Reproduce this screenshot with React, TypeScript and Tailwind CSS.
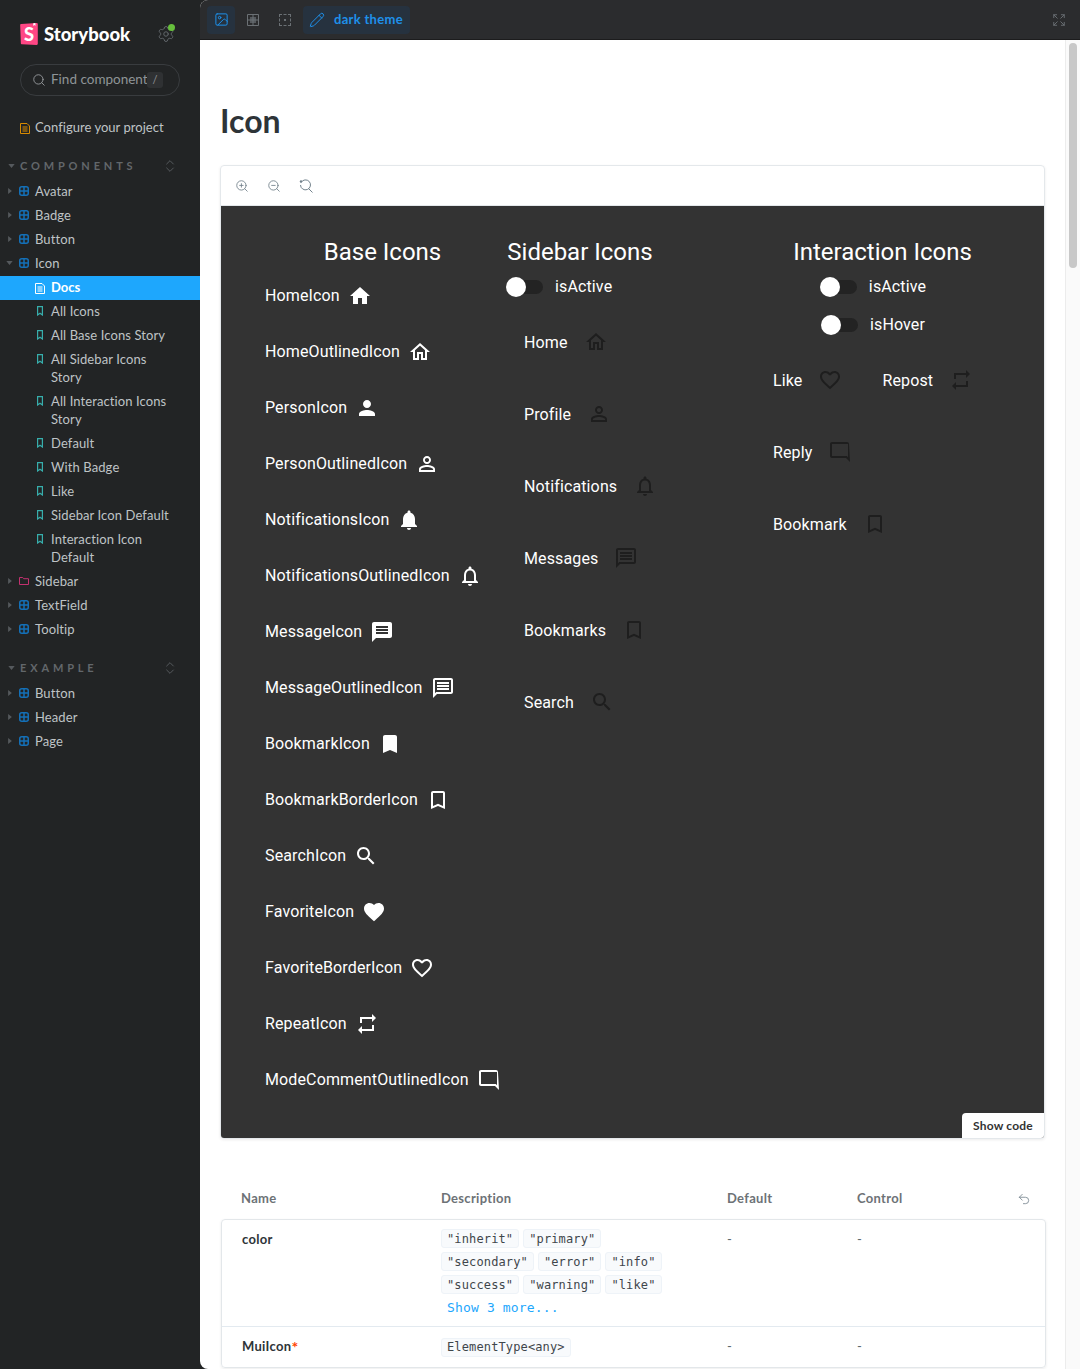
import React from "react";
import { Search, Settings, ZoomIn, ZoomOut, Undo2, ChevronsUpDown, Image, Pencil, Expand } from "lucide-react";

const P: Record<string, string> = {
  home: "M10 20v-6h4v6h5v-8h3L12 3 2 12h3v8z",
  homeO: "m12 5.69 5 4.5V18h-2v-6H9v6H7v-7.81zM12 3 2 12h3v8h6v-6h2v6h6v-8h3z",
  person: "M12 12c2.21 0 4-1.79 4-4s-1.79-4-4-4-4 1.79-4 4 1.79 4 4 4m0 2c-2.67 0-8 1.34-8 4v2h16v-2c0-2.66-5.33-4-8-4",
  personO: "M12 5.9c1.16 0 2.1.94 2.1 2.1s-.94 2.1-2.1 2.1S9.9 9.16 9.9 8s.94-2.1 2.1-2.1m0 9c2.97 0 6.1 1.46 6.1 2.1v1.1H5.9V17c0-.64 3.13-2.1 6.1-2.1M12 4C9.79 4 8 5.79 8 8s1.79 4 4 4 4-1.79 4-4-1.79-4-4-4m0 9c-2.67 0-8 1.34-8 4v3h16v-3c0-2.66-5.33-4-8-4",
  bell: "M12 22c1.1 0 2-.9 2-2h-4c0 1.1.89 2 2 2m6-6v-5c0-3.07-1.64-5.64-4.5-6.32V4c0-.83-.67-1.5-1.5-1.5s-1.5.67-1.5 1.5v.68C7.63 5.36 6 7.92 6 11v5l-2 2v1h16v-1z",
  bellO: "M12 22c1.1 0 2-.9 2-2h-4c0 1.1.9 2 2 2m6-6v-5c0-3.07-1.63-5.64-4.5-6.32V4c0-.83-.67-1.5-1.5-1.5s-1.5.67-1.5 1.5v.68C7.64 5.36 6 7.92 6 11v5l-2 2v1h16v-1zm-2 1H8v-6c0-2.48 1.51-4.5 4-4.5s4 2.02 4 4.5z",
  msg: "M20 2H4c-1.1 0-1.99.9-1.99 2L2 22l4-4h14c1.1 0 2-.9 2-2V4c0-1.1-.9-2-2-2m-2 12H6v-2h12zm0-3H6V9h12zm0-3H6V6h12z",
  msgO: "M20 4v12H5.17L4 17.17V4zm0-2H4c-1.1 0-1.99.9-1.99 2L2 22l4-4h14c1.1 0 2-.9 2-2V4c0-1.1-.9-2-2-2m-2 10H6v2h12zm0-3H6v2h12zm0-3H6v2h12z",
  mark: "M17 3H7c-1.1 0-1.99.9-1.99 2L5 21l7-3 7 3V5c0-1.1-.9-2-2-2",
  markO: "M17 3H7c-1.1 0-2 .9-2 2v16l7-3 7 3V5c0-1.1-.9-2-2-2m0 15-5-2.18L7 18V5h10z",
  search: "M15.5 14h-.79l-.28-.27C15.41 12.59 16 11.11 16 9.5 16 5.91 13.09 3 9.5 3S3 5.91 3 9.5 5.91 16 9.5 16c1.61 0 3.09-.59 4.23-1.57l.27.28v.79l5 4.99L20.49 19zm-6 0C7.01 14 5 11.99 5 9.5S7.01 5 9.5 5 14 7.01 14 9.5 11.99 14 9.5 14",
  fav: "m12 21.35-1.45-1.32C5.4 15.36 2 12.28 2 8.5 2 5.42 4.42 3 7.5 3c1.74 0 3.41.81 4.5 2.09C13.09 3.81 14.76 3 16.5 3 19.58 3 22 5.42 22 8.5c0 3.78-3.4 6.86-8.55 11.54z",
  favO: "M16.5 3c-1.74 0-3.41.81-4.5 2.09C10.91 3.81 9.24 3 7.5 3 4.42 3 2 5.42 2 8.5c0 3.78 3.4 6.86 8.55 11.54L12 21.35l1.45-1.32C18.6 15.36 22 12.28 22 8.5 22 5.42 19.58 3 16.5 3m-4.4 15.55-.1.1-.1-.1C7.14 14.24 4 11.39 4 8.5 4 6.5 5.5 5 7.5 5c1.54 0 3.04.99 3.57 2.36h1.87C13.46 5.99 14.96 5 16.5 5c2 0 3.5 1.5 3.5 3.5 0 2.89-3.14 5.74-7.9 10.05",
  repeat: "M7 7h10v3l4-4-4-4v3H5v6h2zm10 10H7v-3l-4 4 4 4v-3h12v-6h-2z",
  comment: "M20.99 4c0-1.1-.89-2-1.99-2H4c-1.1 0-2 .9-2 2v12c0 1.1.9 2 2 2h14l4 4zM20 4v13.17L18.83 16H4V4z",
};

function Mi({ n, dark }: { n: string; dark?: boolean }) {
  return (
    <svg viewBox="0 0 24 24" className={dark ? "w-6 h-6 shrink-0 fill-[#1e1e1e]" : "w-6 h-6 shrink-0 fill-white"}>
      <path d={P[n]} />
    </svg>
  );
}

function Caret({ open }: { open?: boolean }) {
  return open ? (
    <svg viewBox="0 0 8 5" className="w-[7px] h-[4px] fill-[#55595d]"><path d="M0 0h8L4 5z" /></svg>
  ) : (
    <svg viewBox="0 0 5 8" className="w-[4px] h-[6px] fill-[#55595d]"><path d="M0 0v8l5-4z" /></svg>
  );
}

function GridIco() {
  return (
    <svg viewBox="0 0 10 10" className="w-[10px] h-[10px] shrink-0 fill-none stroke-[#1470b8] stroke-[1.5]">
      <rect x="0.75" y="0.75" width="8.5" height="8.5" rx="2" />
      <path d="M5 .5v9M.5 5h9" />
    </svg>
  );
}
function FolderIco() {
  return (
    <svg viewBox="0 0 10 10" className="w-[10px] h-[10px] shrink-0 fill-none stroke-[#c2316f] stroke-[1]">
      <path d="M.5 1.5h3.2l1 1.2h4.8v5.8H.5z" />
    </svg>
  );
}
function MarkIco() {
  return (
    <svg viewBox="0 0 6 10" className="w-[6px] h-[10px] shrink-0 fill-none stroke-[#37aeac] stroke-[1.200]">
      <path d="M.6.6h4.800v8.400L3 7.300.6 9z" />
    </svg>
  );
}
function DocIco({ c }: { c: string }) {
  return (
    <svg viewBox="0 0 10 11" className={"w-[10px] h-[11px] shrink-0 fill-none stroke-[1] " + c}>
      <path d="M.5.5h6.500l2.500 2.500v7.500H.5z" />
      <path d="M2.500 4h5M2.500 6h5M2.500 8h5" />
    </svg>
  );
}

function Tree({ label, icon, open }: { label: string; icon?: React.ReactNode; open?: boolean }) {
  return (
    <div className="flex min-h-6 items-start py-[3px] text-[13px] leading-[18px] tracking-[0.1px] text-[#bfc3c5]">
      <span className="flex h-[18px] w-[19px] shrink-0 items-center justify-center pl-[3px] pr-[3px]">
        <Caret open={open} />
      </span>
      <span className="flex h-[18px] w-[16px] shrink-0 items-center">{icon ?? <GridIco />}</span>
      <span>{label}</span>
    </div>
  );
}

function Story({ label }: { label: string }) {
  return (
    <div className="flex min-h-6 items-start py-[3px] pl-[37px] text-[13px] leading-[18px] tracking-[0.1px] text-[#bfc3c5]">
      <span className="flex h-[18px] w-[14px] shrink-0 items-center"><MarkIco /></span>
      <span className="w-[125px]">{label}</span>
    </div>
  );
}

function Group({ label }: { label: string }) {
  return (
    <div className="mb-[1px] flex h-6 items-center pl-[8px] pr-[22px]">
      <span className="flex w-[12px] items-center"><Caret open /></span>
      <span className="flex-1 text-[11px] font-bold tracking-[0.35em] text-[#62676b]">{label}</span>
      <ChevronsUpDown size={16} strokeWidth={1.200} className="text-[#62676b]" />
    </div>
  );
}

function Sidebar() {
  return (
    <aside className="flex w-[200px] shrink-0 flex-col font-['Lato',sans-serif]">
      <div className="mt-[23px] flex h-[22px] items-center pl-5">
        <svg viewBox="0 0 256 319" className="w-[18px] h-[22px] shrink-0">
          <path fill="#ff4785" d="M9.87 293.32L.01 30.57C-.31 21.9 6.34 14.55 15.01 14L238.49.03c8.82-.55 16.42 6.15 16.98 14.98.02.33.03.66.03.99v286.32c0 8.840-7.17 16-16.010 16-.24 0-.48 0-.72-.01L25.15 308.71c-8.320-.37-14.970-7.060-15.280-15.390z" />
          <path fill="#fff" d="M188.670 39.130l1.530-36.720L220.900 0l1.330 37.860c.04 1.320-.99 2.430-2.310 2.470-.56.020-1.120-.16-1.560-.51L206.520 30.500l-14.010 10.630c-1.050.8-2.550.59-3.340-.46-.34-.44-.51-.99-.5-1.540z" />
          <text x="128" y="255" textAnchor="middle" fontSize="265" fontWeight="900" fill="#fff" fontFamily="Lato, sans-serif">S</text>
        </svg>
        <span className="ml-[6px] text-[18.500px] font-black leading-none text-white">Storybook</span>
        <span className="relative ml-[27px]">
          <Settings size={18} strokeWidth={1.300} className="text-[#62676b]" />
          <span className="absolute right-0 -top-[1px] h-[7px] w-[7px] rounded-full bg-[#66bf3c]" />
        </span>
      </div>
      <div className="mx-5 mt-[19px] flex h-8 items-center rounded-full border border-[#393c3f] pl-[11px] pr-[15px]">
        <Search size={14} strokeWidth={1.500} className="shrink-0 text-[#9a9ea1]" />
        <span className="-mt-[1px] ml-[5px] w-[96px] overflow-hidden whitespace-nowrap text-[13.500px] text-[#8f9497]">Find components</span>
        <span className="flex h-4 w-4 shrink-0 items-center justify-center rounded-[3px] bg-[#2f3133] text-[11px] text-[#8f9497]">/</span>
      </div>
      <div className="mt-5 flex h-6 items-center pl-5 text-[13px] tracking-[0.03px] text-[#bfc3c5]">
        <span className="w-[15px]"><DocIco c="stroke-[#d98a00]" /></span>
        Configure your project
      </div>
      <div className="mt-[14px]"><Group label="COMPONENTS" /></div>
      <Tree label="Avatar" />
      <Tree label="Badge" />
      <Tree label="Button" />
      <Tree label="Icon" open />
      <div className="-mb-[1px] mt-[1px] flex h-6 items-center bg-[#1ea7fd] pl-[35px] text-[13px] font-bold text-white">
        <span className="w-4"><DocIco c="stroke-white" /></span>
        Docs
      </div>
      <Story label="All Icons" />
      <Story label="All Base Icons Story" />
      <Story label="All Sidebar Icons Story" />
      <Story label="All Interaction Icons Story" />
      <Story label="Default" />
      <Story label="With Badge" />
      <Story label="Like" />
      <Story label="Sidebar Icon Default" />
      <Story label="Interaction Icon Default" />
      <Tree label="Sidebar" icon={<FolderIco />} />
      <Tree label="TextField" />
      <Tree label="Tooltip" />
      <div className="mt-[15px]"><Group label="EXAMPLE" /></div>
      <Tree label="Button" />
      <Tree label="Header" />
      <Tree label="Page" />
    </aside>
  );
}

function Toolbar() {
  return (
    <div className="flex h-10 shrink-0 items-center border-b border-[#1c1c1d] bg-[#2b2c2e] pl-[7px] pr-[14px] font-['Lato',sans-serif]">
      <span className="flex h-7 w-7 items-center justify-center rounded bg-[#26323f]">
        <Image size={15} strokeWidth={1.600} className="text-[#1e90ea]" />
      </span>
      <span className="ml-1 flex h-7 w-7 items-center justify-center">
        <svg viewBox="0 0 12 12" className="w-3 h-3">
          <rect x="3" y="3" width="6" height="6" className="fill-[#55595d]" />
          <path d="M.5.5h11v11H.5zM6 .5v11M.5 6h11" className="fill-none stroke-[#6b7074] stroke-[1]" />
        </svg>
      </span>
      <span className="ml-1 flex h-7 w-7 items-center justify-center">
        <span className="flex h-3 w-3 items-center justify-center border border-dashed border-[#6b7074]">
          <span className="h-[2px] w-[2px] bg-[#6b7074]" />
        </span>
      </span>
      <span className="ml-1 flex h-7 w-[107px] items-center rounded bg-[#26323f] pl-[6px] text-[13px] font-bold tracking-[0.3px] text-[#1e90ea]">
        <Pencil size={16} strokeWidth={1.500} />
        <span className="ml-[9px]">dark theme</span>
      </span>
      <span className="flex-1" />
      <Expand size={14} strokeWidth={1.600} className="text-[#6b7074]" />
    </div>
  );
}

function Row({ label, icon, gap8, dark }: { label: string; icon: string; gap8?: boolean; dark?: boolean }) {
  return (
    <div className={gap8 ? "flex h-6 items-center gap-2" : "flex h-6 items-center gap-4"}>
      <span className={gap8 ? "" : "pt-[1px]"}>{label}</span>
      <Mi n={icon} dark={dark} />
    </div>
  );
}

function Toggle({ label }: { label: string }) {
  return (
    <div className="flex h-[38px] items-center">
      <span className="relative flex h-5 w-[37px] items-center">
        <span className="ml-[3px] h-[14px] w-[34px] rounded-full bg-[#232323]" />
        <span className="absolute left-0 top-0 h-5 w-5 rounded-full bg-white" />
      </span>
      <span className="ml-3">{label}</span>
    </div>
  );
}

const base: [string, string][] = [
  ["HomeIcon", "home"], ["HomeOutlinedIcon", "homeO"], ["PersonIcon", "person"], ["PersonOutlinedIcon", "personO"],
  ["NotificationsIcon", "bell"], ["NotificationsOutlinedIcon", "bellO"], ["MessageIcon", "msg"], ["MessageOutlinedIcon", "msgO"],
  ["BookmarkIcon", "mark"], ["BookmarkBorderIcon", "markO"], ["SearchIcon", "search"], ["FavoriteIcon", "fav"],
  ["FavoriteBorderIcon", "favO"], ["RepeatIcon", "repeat"], ["ModeCommentOutlinedIcon", "comment"],
];
const side: [string, string][] = [
  ["Home", "homeO"], ["Profile", "personO"], ["Notifications", "bellO"], ["Messages", "msgO"], ["Bookmarks", "markO"], ["Search", "search"],
];

function Panel() {
  const h = "h-8 text-center text-[24px] leading-8 tracking-normal";
  return (
    <div className="relative flex h-[932px] bg-[#333333] pl-[44px] pt-[30px] font-['Roboto',sans-serif] text-[16px] tracking-[0.13px] text-white">
      <div className="w-[235px] shrink-0">
        <div className={h}>Base Icons</div>
        <div className="mt-[16px] flex flex-col gap-8">
          {base.map(([l, i]) => <Row key={l} label={l} icon={i} gap8 />)}
        </div>
      </div>
      <div className="ml-[5px] w-[150px] shrink-0">
        <div className={h}>Sidebar Icons</div>
        <div className="pl-[1px]"><Toggle label="isActive" /></div>
        <div className="mt-[24px] flex flex-col gap-12 pl-[19px]">
          {side.map(([l, i]) => <Row key={l} label={l} icon={i} dark />)}
        </div>
      </div>
      <div className="ml-[118px] w-[219px] shrink-0">
        <div className={h}>Interaction Icons</div>
        <div className="flex flex-col items-center pr-[19px]">
          <Toggle label="isActive" />
          <Toggle label="isHover" />
        </div>
        <div className="mt-[24px] flex flex-col gap-12">
          <div className="flex">
            <Row label="Like" icon="favO" dark />
            <div className="ml-10"><Row label="Repost" icon="repeat" dark /></div>
          </div>
          <Row label="Reply" icon="comment" dark />
          <Row label="Bookmark" icon="markO" dark />
        </div>
      </div>
      <div className="absolute bottom-0 right-0 flex h-[25px] w-[82px] items-center justify-center rounded-tl bg-white font-['Lato',sans-serif] text-[12px] font-bold tracking-[0.2px] text-[#333]">
        Show code
      </div>
    </div>
  );
}

function Chip({ t }: { t: string }) {
  return (
    <span className="inline-flex h-[19px] items-center rounded-[3px] border border-[#eef3f8] bg-[#f8fafc] px-[5px] font-['DejaVu_Sans_Mono',monospace] text-[12px] tracking-[0.13px] text-[#3f464b]">
      {t}
    </span>
  );
}

function ArgsTable() {
  return (
    <div className="mt-[50px] font-['Lato',sans-serif] text-[13px] tracking-[0.3px]">
      <div className="grid h-[30px] grid-cols-[200px_286px_130px_1fr] items-start pl-[21px] pr-[14px] font-bold text-[#6d7276]">
        <span>Name</span>
        <span>Description</span>
        <span>Default</span>
        <span className="flex items-center justify-between">
          Control
          <Undo2 size={14} strokeWidth={1.400} className="text-[#73828c]" />
        </span>
      </div>
      <div className="ml-[1px] w-[825px] rounded border border-[#e3e7ea] shadow-[0_1px_3px_rgba(0,0,0,0.08)]">
        <div className="grid h-[107px] grid-cols-[199px_286px_130px_1fr] border-b border-[#e3eaf0] pl-5 pt-[10px]">
          <span className="font-bold text-[#2e3438]">color</span>
          <div className="-mt-[1px] flex flex-col gap-1">
            <div className="flex gap-1"><Chip t={'"inherit"'} /><Chip t={'"primary"'} /></div>
            <div className="flex gap-1"><Chip t={'"secondary"'} /><Chip t={'"error"'} /><Chip t={'"info"'} /></div>
            <div className="flex gap-1"><Chip t={'"success"'} /><Chip t={'"warning"'} /><Chip t={'"like"'} /></div>
            <span className="pl-[6px] font-['DejaVu_Sans_Mono',monospace] text-[13px] tracking-[0.15px] text-[#1ea7fd]">Show 3 more...</span>
          </div>
          <span className="text-[#5c6870]">-</span>
          <span className="text-[#5c6870]">-</span>
        </div>
        <div className="grid h-[40px] grid-cols-[199px_286px_130px_1fr] pl-5 pt-[10px]">
          <span className="font-bold text-[#2e3438]">MuiIcon<span className="inline-block translate-y-[2px] text-[16px] leading-none text-[#ff4400]">*</span></span>
          <div><Chip t="ElementType<any>" /></div>
          <span className="text-[#5c6870]">-</span>
          <span className="text-[#5c6870]">-</span>
        </div>
      </div>
    </div>
  );
}

export default function App() {
  return (
    <div className="flex h-[1369px] w-[1080px] overflow-hidden bg-[#222425]">
      <Sidebar />
      <main className="flex min-w-0 flex-1 flex-col overflow-hidden rounded-l-[8px] bg-white">
        <Toolbar />
        <div className="flex min-h-0 flex-1">
          <div className="w-[865px] shrink-0 overflow-hidden px-5 pt-[63px]">
            <h1 className="font-['Lato',sans-serif] text-[32px] font-bold leading-9 text-[#2e3438]">Icon</h1>
            <div className="mt-[26px] w-[825px] overflow-hidden rounded border border-[#e4e8eb] shadow-[0_1px_3px_rgba(0,0,0,0.08)]">
              <div className="flex h-10 items-center gap-[18px] border-b border-[#e4e8eb] pl-[14px] text-[#73828c]">
                <ZoomIn size={14} strokeWidth={1.500} />
                <ZoomOut size={14} strokeWidth={1.500} />
                <svg viewBox="0 0 14 14" className="w-[14px] h-[14px] fill-none stroke-[#73828c] stroke-[1]">
                  <path d="M2.100 3.500A5 5 0 1 1 1.500 6M9.500 9.500 13.500 13.500" />
                  <circle cx="2" cy="2.500" r="1.200" className="fill-[#73828c] stroke-none" />
                </svg>
              </div>
              <Panel />
            </div>
            <ArgsTable />
          </div>
          <div className="flex-1 border-l border-[#ececec] bg-[#fafafa] pl-[3px] pt-[3px]">
            <div className="h-[225px] w-2 rounded-full bg-[#c8c8c8]" />
          </div>
        </div>
      </main>
    </div>
  );
}
